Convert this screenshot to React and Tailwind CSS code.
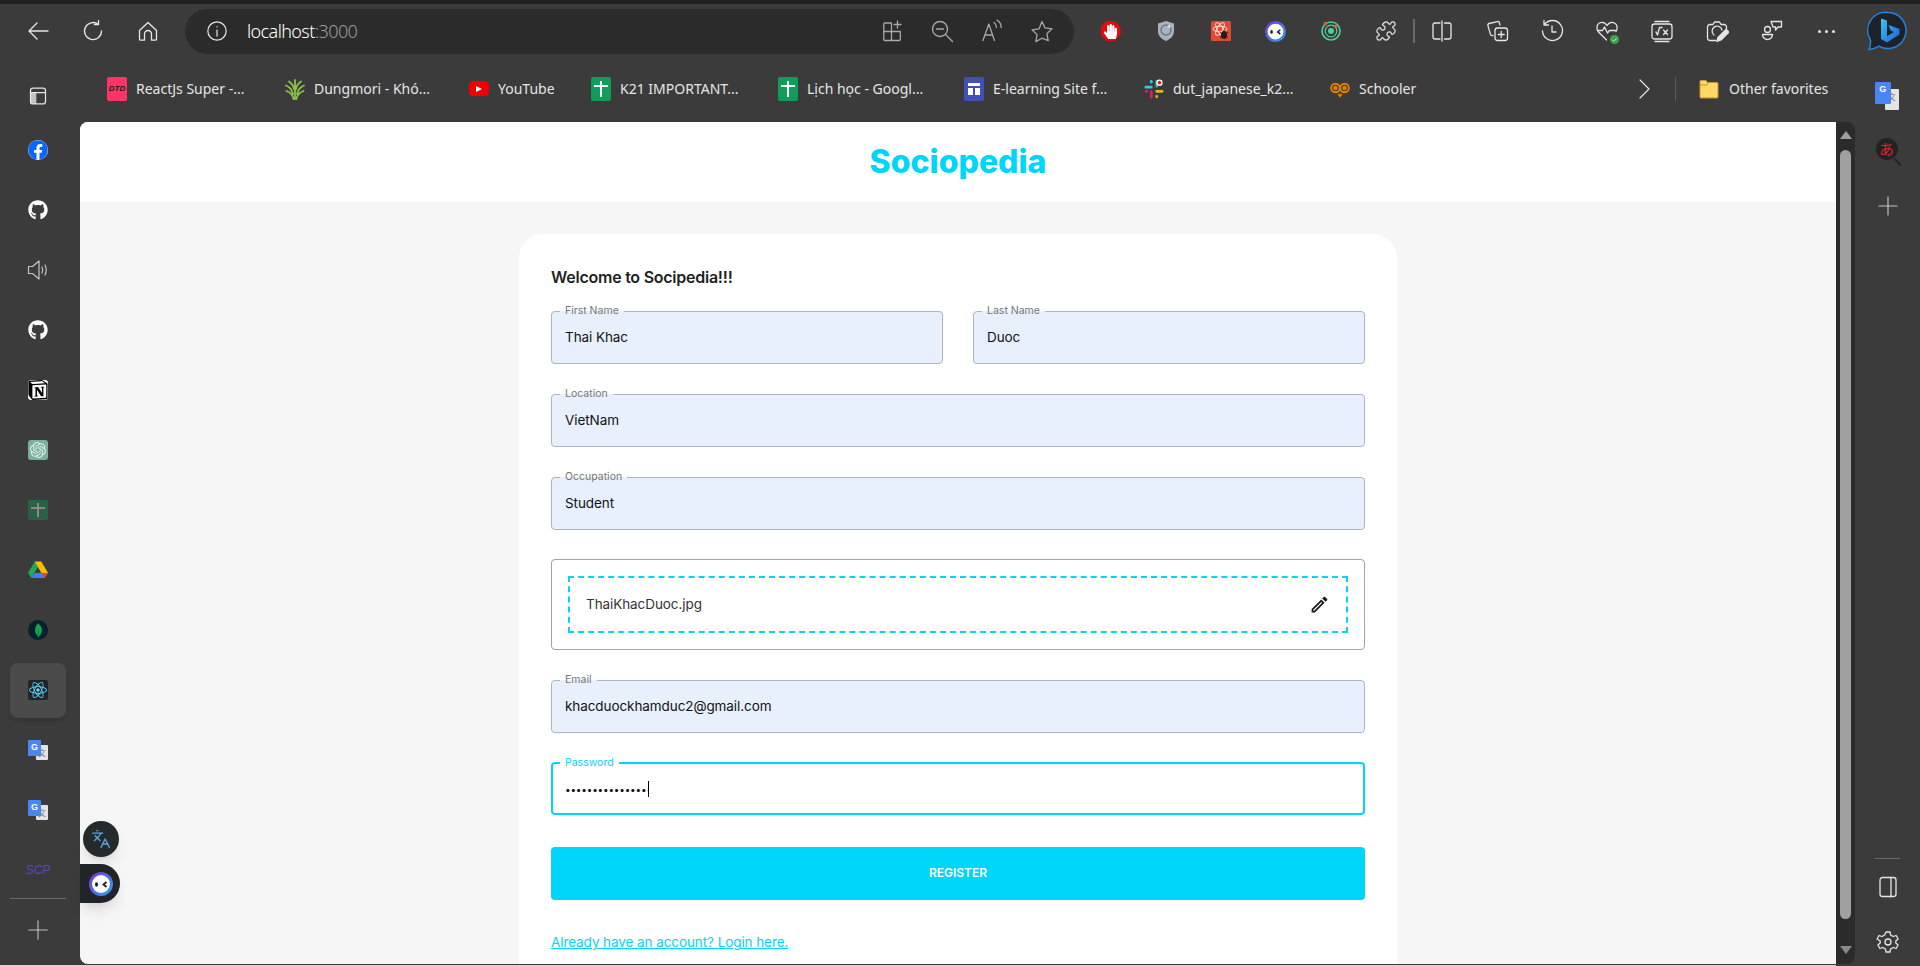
import React from 'react';
import { FaFacebook, FaGithub, FaHandPaper } from 'react-icons/fa';
import { SiNotion, SiOpenai, SiMongodb, SiReact } from 'react-icons/si';
import { MdOutlineEdit } from 'react-icons/md';
import { Languages, Puzzle } from 'lucide-react';

const chrome = { fontFamily: '"Noto Sans", sans-serif' };

// thin Edge-style stroke icon
const Line = ({ size = 24, width = 1.3, children, className = '' }) => (
  <svg width={size} height={size} viewBox="0 0 24 24" fill="none" stroke="currentColor" strokeWidth={width} strokeLinecap="round" strokeLinejoin="round" className={className}>
    {children}
  </svg>
);

const Back = () => <Line><path d="M22 12H3M11 4l-8 8 8 8" /></Line>;
const Reload = () => <Line><path d="M20.5 12a8.5 8.5 0 1 1-3.2-6.6M17.5 1.5v4.2h-4.2" /></Line>;
const Home = () => <Line><path d="M3.5 11.5 12 3.5l8.5 8V20a1.2 1.2 0 0 1-1.2 1.2H15.5V15a3.5 3.5 0 0 0-7 0v6.2H4.7A1.2 1.2 0 0 1 3.5 20z" /></Line>;
const Info = () => <Line size={22}><circle cx="12" cy="12" r="10" /><path d="M12 11v6.5M12 7.3v.2" /></Line>;
const Apps = () => <Line><path d="M11.5 4H4.8a1 1 0 0 0-1 1v15.5a1 1 0 0 0 1 1h14.5a1 1 0 0 0 1-1v-8H3.8M11.5 4v17.5M17.5 2v7M14 5.5h7" /></Line>;
const ZoomOut = () => <Line><circle cx="10" cy="10" r="7.5" /><path d="m15.5 15.5 7 7M6.5 10h7" /></Line>;
const ReadAloud = () => <Line><path d="M3 21.5 8.8 5l5.7 16.5M5 16h7.5M14 3.5c1.7 1.2 2.5 3 2.5 5M17 1c2.7 1.8 4.2 4.3 4.2 7.5" /></Line>;
const Star = () => <Line><path d="m12 2.5 3 6.4 7 .9-5.1 4.8 1.3 7L12 19.2l-6.2 3.4 1.3-7L2 10.8l7-.9z" /></Line>;
const Split = () => <Line><path d="M10 4H5a2 2 0 0 0-2 2v12a2 2 0 0 0 2 2h5M14.5 4H19a2 2 0 0 1 2 2v12a2 2 0 0 1-2 2h-4.5M12 2v20" /></Line>;
const Collections = () => <Line><rect x="10" y="9" width="12.5" height="12.5" rx="2.5" /><path d="M16.2 12.5v6M13.2 15.5h6M15 6l-.7-2.4a1.5 1.5 0 0 0-1.9-1L4 4.5a1.5 1.5 0 0 0-1.1 1.9l2.4 8.5c.3 1 1.5 1.9 2.7 1.7" /></Line>;
const History = () => <Line><path d="M4.5 5.5A10 10 0 1 1 2.5 12M4 1.5V6h4.5M12 7v6h4" /></Line>;
const Health = () => (
  <div className="relative w-6 h-6">
    <Line><path d="M11.5 21 3.5 13C1 10 1.5 5.5 4.5 4c2.5-1.2 5.5-.5 7.5 2.5 2-3 5-3.700 7.500-2.500 3 1.500 3.500 5.500 1.500 8.500M2.500 11.500h5l2-3.500 3 6 2-2.500h6" /></Line>
    <span className="absolute right-0 bottom-[-1px] w-[9px] h-[9px] rounded-full bg-[#3fa34d] flex items-center justify-center">
      <svg width="7" height="7" viewBox="0 0 8 8" fill="none" stroke="#d6f0da" strokeWidth="1"><path d="M1.5 4.2 3.3 6l3.2-3.5" /></svg>
    </span>
  </div>
);
const MathIcon = () => (
  <Line>
    <rect x="2" y="5" width="20" height="15" rx="2.5" />
    <path d="M5 2.5h14M5 22.5h14M6 13l1.5 3 2-7.5H12M13.5 11l4 4.5M17.5 11l-4 4.5" />
  </Line>
);
const Camera = () => (
  <Line>
    <path d="M11 21.5H5A2.500 2.500 0 0 1 2.500 19V8A2.500 2.500 0 0 1 5 5.500h3L9.500 3h5L16 5.500h3A2.500 2.500 0 0 1 21.500 8v3" />
    <path d="M9 16a5 5 0 1 1 8-5" />
    <path d="m12 22.500 1-4 8-8 3 2.500-8 8z" fill="currentColor" />
  </Line>
);
const People = () => <Line><circle cx="7.5" cy="10.5" r="3" /><path d="M2.5 15.5h10a5 5 0 0 1-10 0zM11 2.5h10.5V8H18l-2.5 3V8H13z" /></Line>;
const More = () => (
  <div className="flex gap-[4px]">
    <span className="w-[3px] h-[3px] rounded-full bg-[#e6e6e6]" />
    <span className="w-[3px] h-[3px] rounded-full bg-[#e6e6e6]" />
    <span className="w-[3px] h-[3px] rounded-full bg-[#e6e6e6]" />
  </div>
);

const AdBlock = () => (
  <div className="w-5 h-5 bg-[#e40b0b] flex items-center justify-center [clip-path:polygon(30%_0,70%_0,100%_30%,100%_70%,70%_100%,30%_100%,0_70%,0_30%)]">
    <FaHandPaper size={15} className="text-white" />
  </div>
);
const ShieldExt = () => (
  <svg width="20" height="22" viewBox="0 0 20 22">
    <path d="M10 1 18 3.5V11c0 5-3.5 8-8 10-4.5-2-8-5-8-10V3.5z" fill="#a9b2c0" />
    <circle cx="10" cy="10" r="5" fill="none" stroke="#6f7885" strokeWidth="1.5" />
    <circle cx="13" cy="6.5" r="1.5" fill="#d8dce2" />
  </svg>
);
const BugExt = () => (
  <svg width="20" height="20" viewBox="0 0 20 20">
    <rect width="20" height="20" rx="1.5" fill="#dd4b34" />
    <g fill="none" stroke="#f8d8d0" strokeWidth="1">
      <ellipse cx="9" cy="8" rx="7" ry="2.8" />
      <ellipse cx="9" cy="8" rx="7" ry="2.8" transform="rotate(60 9 8)" />
      <ellipse cx="9" cy="8" rx="7" ry="2.8" transform="rotate(120 9 8)" />
    </g>
    <ellipse cx="13" cy="14" rx="3" ry="4" fill="#2a1a18" />
    <path d="M9 11.5l8 5M9 16.5l8-5M13 9v9" stroke="#2a1a18" strokeWidth="1" />
  </svg>
);
const BotFace = ({ size = 21 }) => (
  <svg width={size} height={size} viewBox="0 0 24 24">
    <defs>
      <linearGradient id="bot-ring" x1="0" y1="0" x2="1" y2="1">
        <stop offset="0" stopColor="#7b2fe0" />
        <stop offset="1" stopColor="#26a7e8" />
      </linearGradient>
    </defs>
    <circle cx="12" cy="12" r="12" fill="url(#bot-ring)" />
    <circle cx="12" cy="12" r="9" fill="#fff" />
    <ellipse cx="7.5" cy="12.5" rx="1.5" ry="2.2" fill="#1d1d1f" />
    <path d="M17.5 10l-3 2.500 3 2.500" fill="none" stroke="#1d1d1f" strokeWidth="1.8" />
  </svg>
);
const TargetExt = () => (
  <svg width="20" height="22" viewBox="0 0 20 22">
    <circle cx="10" cy="11" r="9" fill="none" stroke="#4dcf98" strokeWidth="1.6" />
    <circle cx="10" cy="11" r="5.8" fill="none" stroke="#4dcf98" strokeWidth="1.2" />
    <circle cx="10" cy="11" r="3" fill="#4dcf98" />
    <circle cx="15" cy="6" r="1.8" fill="#e0602c" />
    <circle cx="4.5" cy="3.5" r="1.8" fill="#e0602c" />
  </svg>
);
const Bing = () => (
  <svg width="40" height="40" viewBox="0 0 40 40">
    <defs>
      <linearGradient id="bing-b" x1="0" y1="0" x2="1" y2="1">
        <stop offset="0" stopColor="#3cc4f5" />
        <stop offset="1" stopColor="#1a5fd8" />
      </linearGradient>
    </defs>
    <path d="M21 1.5a18 18 0 1 1-9 33.600c-3 1.900-6 3-10 3.400 1.300-3 1.800-6 1.500-9.500A18 18 0 0 1 21 1.500z" fill="#1d2128" stroke="#1f86dc" strokeWidth="1.5" />
    <path d="M14 7.5l6 2.100v15.700l7.200-4.200-3.500-1.600-2.200-5.500 11 3.900v5.600L20 31.500l-6-3.400z" fill="url(#bing-b)" />
  </svg>
);

const Sheet = ({ dim }) => (
  <div className={dim ? 'w-5 h-5 rounded-[2px] bg-[#2a6045] relative' : 'w-5 h-6 rounded-[2px] bg-[#0f9d58] relative'}>
    <span className={dim ? 'absolute left-[9px] top-[3px] w-[2px] h-[14px] bg-[#8a8a8a]' : 'absolute left-[9px] top-[4px] w-[2px] h-[16px] bg-white'} />
    <span className={dim ? 'absolute left-[3px] top-[7px] w-[14px] h-[2px] bg-[#8a8a8a]' : 'absolute left-[3px] top-[8px] w-[14px] h-[2px] bg-white'} />
  </div>
);
const Dtd = () => (
  <div className="w-5 h-6 rounded-[2px] bg-[#ff3366] flex items-center justify-center">
    <span className="text-[8px] font-bold italic text-[#1b1b1b] leading-none" style={{ fontFamily: '"Liberation Sans", sans-serif' }}>DTD</span>
  </div>
);
const Dungmori = () => (
  <svg width="20" height="22" viewBox="0 0 20 22" fill="none" stroke="#8bc34a" strokeWidth="1.8" strokeLinecap="round">
    <path d="M8.5 21c-.5-4-2-6-7-8M11.5 21c.5-4 2-6 7-8M8 16C7 12 5 9 1 7.5M12 16c1-4 3-7 7-8.500M9 11C8.500 8 7 5.500 4 3.500M11 11c.5-3 2-5.500 5-7.500M10 21V2" />
  </svg>
);
const YouTube = () => (
  <div className="w-5 h-[15px] rounded-[4px] bg-[#f00000] flex items-center justify-center">
    <span className="w-0 h-0 border-y-[3.5px] border-y-transparent border-l-[6px] border-l-white" />
  </div>
);
const Form = () => (
  <div className="w-5 h-6 rounded-[2px] bg-[#3f51b5] flex flex-col gap-[2px] px-[4px] py-[6px]">
    <span className="h-[3px] bg-white" />
    <div className="flex gap-[2px] flex-1">
      <span className="w-[5px] bg-white" />
      <span className="flex-1 bg-white" />
    </div>
  </div>
);
const Slack = () => (
  <svg width="22" height="22" viewBox="0 0 22 22" strokeWidth="3" strokeLinecap="round" fill="none">
    <path d="M2 9h6M8 2.5v1" stroke="#36c5f0" />
    <path d="M14 2.5V8" stroke="#2eb67d" />
    <path d="M14 13.5h6M14 19v.5" stroke="#ecb22e" />
    <path d="M8 14v6M2.5 13.5H3" stroke="#e01e5a" />
    <circle cx="17" cy="4" r="3.5" fill="#fff" stroke="none" />
    <circle cx="17" cy="4" r="2" fill="#e0222c" stroke="none" />
  </svg>
);
const Owl = () => (
  <svg width="20" height="18" viewBox="0 0 20 18" fill="none" stroke="#e67e00" strokeWidth="2">
    <circle cx="5.5" cy="8" r="4.3" />
    <circle cx="14.5" cy="8" r="4.3" />
    <circle cx="5.5" cy="8" r="1.2" fill="#e67e00" />
    <circle cx="14.5" cy="8" r="1.2" fill="#e67e00" />
    <path d="M8.5 14l1.500 2 1.500-2" />
  </svg>
);
const Folder = () => (
  <svg width="20" height="20" viewBox="0 0 20 20">
    <path d="M1 2.5a1 1 0 0 1 1-1h5l1.500 2H18a1 1 0 0 1 1 1V18a1 1 0 0 1-1 1H2a1 1 0 0 1-1-1z" fill="#ffd966" stroke="#c9962a" />
    <path d="M1 6h7l1-2.500" fill="none" stroke="#c9962a" />
  </svg>
);
const Drive = () => (
  <svg width="20" height="18" viewBox="0 0 20 18">
    <polygon points="6.7,0.5 0,12 3.3,17 10,6" fill="#1faa5a" />
    <polygon points="13.3,0.5 20,12 13.4,12 6.7,0.5" fill="#fbbc04" />
    <polygon points="3.3,17 16.7,17 20,12 6.6,12" fill="#3b82f6" />
    <polygon points="20,12 16.7,17 13.4,12" fill="#ea4335" />
  </svg>
);
const Translate = ({ size = 'small' }) => (
  <div className={size === 'small' ? 'relative w-5 h-5' : 'relative w-6 h-7'}>
    <span className="absolute right-0 bottom-0 w-[60%] h-[75%] bg-[#e4e4e4] rounded-[1px] text-[8px] leading-[16px] text-center text-[#777]" style={{ fontFamily: '"Noto Sans CJK SC", sans-serif' }}>文</span>
    <span className="absolute left-0 top-0 w-[65%] h-[80%] bg-[#4a86f0] rounded-[1px] text-[9px] leading-[14px] text-center font-bold text-white" style={{ fontFamily: '"Liberation Sans", sans-serif' }}>G</span>
  </div>
);
const Jisho = () => (
  <div className="relative w-6 h-6">
    <span className="absolute left-0 top-0 w-[22px] h-[22px] rounded-full bg-[#222] text-[#e2222c] text-[15px] leading-[21px] text-center" style={{ fontFamily: '"Noto Sans CJK JP", sans-serif' }}>あ</span>
    <span className="absolute right-[-2px] bottom-[-1px] w-[9px] h-[2px] bg-[#222] rotate-45" />
  </div>
);

const bookmarks = [
  { icon: <Dtd />, text: 'ReactJs Super -...', w: 'w-[112px]' },
  { icon: <Dungmori />, text: 'Dungmori - Khó...', w: 'w-[118px]' },
  { icon: <YouTube />, text: 'YouTube', w: 'w-[56px]' },
  { icon: <Sheet />, text: 'K21 IMPORTANT...', w: 'w-[121px]' },
  { icon: <Sheet />, text: 'Lịch học - Googl...', w: 'w-[120px]' },
  { icon: <Form />, text: 'E-learning Site f...', w: 'w-[114px]' },
  { icon: <Slack />, text: 'dut_japanese_k2...', w: 'w-[120px]' },
  { icon: <Owl />, text: 'Schooler', w: 'w-[58px]' },
];

const sideIcons = [
  <div key="fb" className="w-5 h-5 rounded-full bg-white"><FaFacebook size={20} className="text-[#0866ff]" /></div>,
  <FaGithub key="gh" size={20} className="text-white" />,
  <svg key="vol" width="22" height="22" viewBox="0 0 22 22" fill="none" stroke="#c4c4c4" strokeWidth="1.2" strokeLinejoin="round" strokeLinecap="round"><path d="M1.5 7.5h4L12 2v18l-6.500-5.500h-4zM15 8c1 2 1 4 0 6M18 6c1.500 3 1.500 7 0 10" /></svg>,
  <FaGithub key="gh2" size={20} className="text-white" />,
  <div key="notion" className="w-5 h-5 rounded-[3px] bg-white flex items-center justify-center"><SiNotion size={20} className="text-black" /></div>,
  <div key="gpt" className="w-5 h-5 rounded-[3px] bg-[#7ab09d] flex items-center justify-center"><SiOpenai size={16} className="text-[#e4efeb]" /></div>,
  <Sheet key="sheet" dim />,
  <Drive key="drive" />,
  <div key="mongo" className="w-5 h-5 rounded-full bg-[#04202c] flex items-center justify-center"><SiMongodb size={15} className="text-[#13aa52]" /></div>,
  <div key="react" className="w-5 h-5 bg-[#20232a] rounded-[2px] flex items-center justify-center"><SiReact size={18} className="text-[#61dafb]" /></div>,
  <Translate key="t1" />,
  <Translate key="t2" />,
  <span key="scp" className="text-[12px] italic text-[#5b45c9] leading-none" style={{ fontFamily: '"Liberation Sans", sans-serif' }}>SCP</span>,
];

const Field = ({ label, value, className = '' }) => (
  <fieldset className={`h-[60px] min-w-0 border border-[#aeb4c6] rounded-[4px] bg-[#e8f0fe] ${className}`}>
    <legend className="ml-2 px-[5px] text-[10.5px] leading-[15px] text-[#757575]"><span className="relative -top-px">{label}</span></legend>
    <input readOnly value={value} className="w-full h-[36px] px-[13px] bg-transparent outline-none text-[13.5px] tracking-[-0.08px] text-[#111]" />
  </fieldset>
);

const Register = () => (
  <div className="w-[878px] mx-auto mt-8 bg-white rounded-[24px] p-8" style={{ fontFamily: 'Inter, sans-serif' }}>
    <h5 className="text-[16px] leading-[22px] font-semibold tracking-[-0.25px] text-[#1f1f1f] mb-4">Welcome to Socipedia!!!</h5>
    <div className="flex flex-col gap-[23px]">
      <div className="grid grid-cols-2 gap-[30px]">
        <Field label="First Name" value="Thai Khac" />
        <Field label="Last Name" value="Duoc" />
      </div>
      <Field label="Location" value="VietNam" />
      <Field label="Occupation" value="Student" />
      <div className="mt-[6px] border border-[#a3a3a3] rounded-[4px] p-4">
        <div className="h-[57px] border-2 border-dashed border-[#00d5fa] px-4 flex items-center justify-between">
          <span className="text-[13.5px] tracking-[-0.08px] text-[#333]">ThaiKhacDuoc.jpg</span>
          <MdOutlineEdit size={21} className="text-[#1a1a1a]" />
        </div>
      </div>
      <Field label="Email" value="khacduockhamduc2@gmail.com" />
      <fieldset className="-mt-px h-[60px] min-w-0 border-2 border-[#00d5fa] rounded-[4px] bg-white">
        <legend className="ml-[7px] px-[5px] text-[10.5px] leading-[15px] text-[#00d5fa]">Password</legend>
        <div className="flex items-center h-[38px] pl-[12px]">
          <input readOnly type="password" value="khacduockhamduc2" className="w-[83px] bg-transparent outline-none text-[10px] tracking-[-0.2px] text-[#111]" />
          <span className="w-px h-[16px] bg-black" />
        </div>
      </fieldset>
      <button className="mt-[9px] h-[53px] pb-[2px] rounded-[4px] bg-[#00d5fa] text-white text-[12px] font-semibold">REGISTER</button>
    </div>
    <a className="block mt-[32px] text-[13.5px] tracking-[-0.08px] leading-5 text-[#00d5fa] underline">Already have an account? Login here.</a>
  </div>
);

export default function App() {
  return (
    <div className="relative w-[1920px] h-[966px] overflow-hidden flex flex-col bg-[#3b3b3b] text-[#e6e6e6]" style={chrome}>
      <div className="h-1 bg-[#1f1f1f]" />

      {/* toolbar */}
      <div className="h-[54px] flex items-center pl-[10px]">
        <div className="w-[55px] flex justify-center"><Back /></div>
        <div className="w-[55px] flex justify-center"><Reload /></div>
        <div className="w-[55px] flex justify-center"><Home /></div>
        <div className="ml-[10px] w-[889px] h-[45px] rounded-[23px] bg-[#2b2b2b] flex items-center pl-[21px] pr-[7px]">
          <Info />
          <span className="ml-[19px] text-[18px] tracking-[-0.6px] font-light text-white">localhost<span className="text-[#9a9a9a]">:3000</span></span>
          <div className="ml-auto flex text-[#a8a8a8]">
            <div className="w-[50px] flex justify-center"><Apps /></div>
            <div className="w-[50px] flex justify-center"><ZoomOut /></div>
            <div className="w-[50px] flex justify-center"><ReadAloud /></div>
            <div className="w-[50px] flex justify-center"><Star /></div>
          </div>
        </div>
        <div className="ml-[9px] flex items-center">
          <div className="w-[55px] flex justify-center"><AdBlock /></div>
          <div className="w-[55px] flex justify-center"><ShieldExt /></div>
          <div className="w-[55px] flex justify-center"><BugExt /></div>
          <div className="w-[55px] flex justify-center"><BotFace /></div>
          <div className="w-[55px] flex justify-center"><TargetExt /></div>
          <div className="w-[55px] flex justify-center"><Puzzle size={22} strokeWidth={1.3} /></div>
          <span className="w-[2px] h-6 bg-[#6a6a6a]" />
          <div className="w-[54px] flex justify-center"><Split /></div>
          <div className="w-[55px] flex justify-center"><Collections /></div>
          <div className="w-[55px] flex justify-center"><History /></div>
          <div className="w-[55px] flex justify-center"><Health /></div>
          <div className="w-[55px] flex justify-center"><MathIcon /></div>
          <div className="w-[55px] flex justify-center"><Camera /></div>
          <div className="w-[55px] flex justify-center"><People /></div>
          <div className="w-[55px] flex justify-center"><More /></div>
          <div className="w-[65px] flex justify-center"><Bing /></div>
        </div>
      </div>

      {/* favorites bar */}
      <div className="h-[64px] flex items-center text-[14px] pr-[21px] pb-[3px]">
        <div className="w-[107px] pl-[28px] translate-y-[7px]">
          <Line size={20} width={1.5}><rect x="3" y="2.5" width="18" height="19" rx="3" /><path d="M3 8h18" /><rect x="3" y="8" width="7" height="13.5" fill="currentColor" stroke="none" opacity="0.8" /></Line>
        </div>
        <div className="flex gap-[37px]">
          {bookmarks.map((b) => (
            <div key={b.text} className="flex items-center gap-[9px]">
              <div className="w-5 flex justify-center">{b.icon}</div>
              <span className={`${b.w} whitespace-nowrap`}>{b.text}</span>
            </div>
          ))}
        </div>
        <div className="ml-auto flex items-center">
          <Line size={24} width={1.2}><path d="m8 3 9 9-9 9" /></Line>
          <span className="ml-[19px] w-px h-6 bg-[#5c5c5c]" />
          <div className="ml-[23px]"><Folder /></div>
          <span className="ml-[10px] w-[98px] whitespace-nowrap">Other favorites</span>
          <div className="ml-[48px] translate-y-[7px]"><Translate size="big" /></div>
        </div>
      </div>

      {/* main row */}
      <div className="flex-1 min-h-0 flex">
        <div className="w-20 pr-1 -mt-[2px] flex flex-col">
          {sideIcons.map((icon, i) => (
            <div key={i} className="h-[60px] flex items-center justify-center">
              {i === 9 ? (
                <div className="w-14 h-[55px] rounded-lg bg-[#4b4b4b] shadow-md flex items-center justify-center">{icon}</div>
              ) : icon}
            </div>
          ))}
          <div className="-mt-[2px] mx-[10px] h-px bg-[#6a6a6a]" />
          <div className="mt-[20px] flex justify-center text-[#c4c4c4]">
            <Line size={22} width={1.2}><path d="M12 2v20M2 12h20" /></Line>
          </div>
        </div>

        <div className="w-[1756px] rounded-l-lg overflow-hidden bg-[#f6f6f6]" style={{ fontFamily: 'Inter, sans-serif' }}>
          <div className="h-20 bg-white flex items-center justify-center">
            <h1 className="text-[32px] font-extrabold text-[#00d5fa]">Sociopedia</h1>
          </div>
          <Register />
        </div>

        {/* scrollbar */}
        <div className="w-[19px] bg-[#2b2b2b] rounded-r-lg flex flex-col items-center">
          <span className="mt-[9px] w-0 h-0 border-x-[6px] border-x-transparent border-b-[8px] border-b-[#a0a0a0]" />
          <div className="mt-[11px] w-[11px] h-[769px] rounded-full bg-[#a0a0a0]" />
          <span className="mt-[27px] w-0 h-0 border-x-[6px] border-x-transparent border-t-[8px] border-t-[#8a8a8a]" />
        </div>

        <div className="w-[65px] pt-4 pb-[10px] flex flex-col items-center">
          <Jisho />
          <div className="mt-8 text-[#c4c4c4]"><Line width={1.2}><path d="M12 3v18M3 12h18" /></Line></div>
          <div className="mt-auto w-[25px] h-px bg-[#6a6a6a]" />
          <div className="mt-4"><Line width={1.3}><rect x="4" y="2.5" width="16" height="19" rx="2.5" /><path d="M15 2.5v19" /></Line></div>
          <div className="mt-[31px]"><Line width={1.3}><circle cx="12" cy="12" r="3" /><path d="M10 2h4l.6 3 2.600 1.500 2.900-1 2 3.500-2.300 2v2l2.300 2-2 3.500-2.900-1-2.600 1.500-.6 3h-4l-.6-3-2.600-1.500-2.900 1-2-3.500 2.300-2v-2L1.100 9l2-3.500 2.900 1L8.600 5z" /></Line></div>
        </div>
      </div>

      <div className="h-px bg-[#3b3b3b]" />
      <div className="h-px w-[1836px] bg-[#d4d4d4]" />

      {/* floating extension buttons */}
      <div className="absolute left-[83px] top-[821px] w-9 h-9 rounded-full bg-[#252a2c] shadow-lg flex items-center justify-center">
        <Languages size={20} strokeWidth={1.6} className="text-[#5aa5e0]" />
      </div>
      <div className="absolute left-20 top-[864px] w-[40px] h-[39px] rounded-r-full bg-[#222527] shadow-lg flex items-center justify-center pl-[1px]">
        <BotFace size={24} />
      </div>
    </div>
  );
}
